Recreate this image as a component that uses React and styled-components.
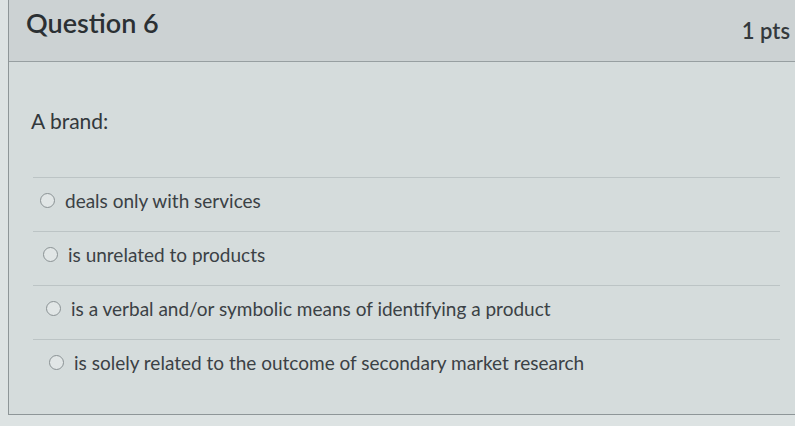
import React from "react";
import styled, { createGlobalStyle } from "styled-components";

const GlobalStyle = createGlobalStyle`
  html, body {
    margin: 0;
    padding: 0;
    background: #dde3e3;
  }
  body {
    font-family: Lato, "Open Sans", "Liberation Sans", sans-serif;
    color: #2f3538;
  }
`;

const Page = styled.div`
  width: 795px;
  height: 426px;
  overflow: hidden;
`;

const Card = styled.div`
  margin-left: 8px;
  border-left: 1px solid #8e9698;
  border-bottom: 1px solid #8e9698;
  background: #d5dcdc;
`;

const Header = styled.div`
  height: 61px;
  display: flex;
  align-items: flex-start;
  justify-content: space-between;
  padding: 0 5px 0 17px;
  background: #ccd2d3;
  border-bottom: 1px solid #979fa1;
`;

const Title = styled.h2`
  margin: 6px 0 0;
  font-size: 27px;
  font-weight: 600;
  color: #2b3033;
`;

const Points = styled.div`
  margin-top: 17px;
  font-size: 22px;
  font-weight: 600;
  color: #34393c;
`;

const Body = styled.div`
  padding: 45px 15px 21px 22px;
`;

const Prompt = styled.p`
  margin: 0 0 43px;
  font-size: 21px;
  line-height: 27px;
  color: #32383b;
`;

const Options = styled.div`
  display: flex;
  flex-direction: column;
  padding-left: 2px;
`;

const Option = styled.label`
  height: 54px;
  display: flex;
  align-items: flex-start;
  gap: 10px;
  padding: 12px 0 0 ${(p) => p.$indent}px;
  box-sizing: border-box;
  border-top: 1px solid #bcc4c5;
  font-size: 19px;
  line-height: 22px;
  color: #3b4145;
`;

const Radio = styled.span`
  flex: none;
  width: 13px;
  height: 13px;
  margin-top: 3px;
  border-radius: 50%;
  border: 1.5px solid #8a9294;
  background: #e1e6e6;
`;

const answers = [
  "deals only with services",
  "is unrelated to products",
  "is a verbal and/or symbolic means of identifying a product",
  "is solely related to the outcome of secondary market research",
];

export default function App() {
  return (
    <Page>
      <GlobalStyle />
      <Card>
        <Header>
          <Title>Question 6</Title>
          <Points>1 pts</Points>
        </Header>
        <Body>
          <Prompt>A brand:</Prompt>
          <Options>
            {answers.map((a, i) => (
              <Option key={a} $indent={7 + i * 3}>
                <Radio />
                {a}
              </Option>
            ))}
          </Options>
        </Body>
      </Card>
    </Page>
  );
}
